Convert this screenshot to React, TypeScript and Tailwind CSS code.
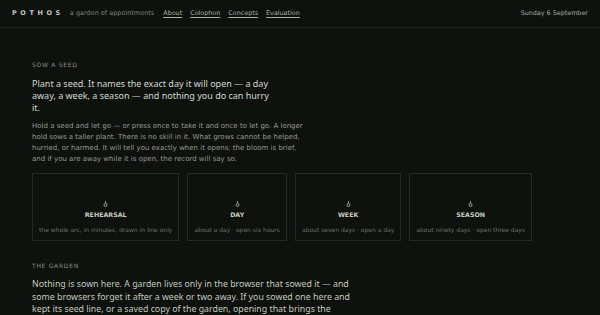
import React from "react";

const seeds = [
  { name: "REHEARSAL", note: "the whole arc, in minutes, drawn in line only" },
  { name: "DAY", note: "about a day · open six hours" },
  { name: "WEEK", note: "about seven days · open a day" },
  { name: "SEASON", note: "about ninety days · open three days" },
];

function Seed() {
  return (
    <svg width="5" height="6" viewBox="0 0 5 6" className="text-[#b9c0b5]">
      <line x1="2.5" y1="0" x2="2.5" y2="2.4" stroke="currentColor" strokeWidth="0.8" />
      <circle cx="2.5" cy="4" r="1.5" fill="none" stroke="currentColor" strokeWidth="0.8" />
    </svg>
  );
}

export default function App() {
  return (
    <div className="h-[315px] overflow-hidden bg-[#0e110e] font-['DejaVu_Sans',sans-serif] text-[#c9cfc5]">
      {/* Top bar */}
      <header className="flex items-center h-[28px] px-[12px] border-b border-[#1f241f]">
        <span className="text-[6.5px] font-bold tracking-[0.55em] text-[#c3c9bf]">POTHOS</span>
        <span className="ml-[6px] text-[6.5px] text-[#7d8479]">a garden of appointments</span>
        <nav className="ml-[9px] flex gap-[8px] text-[6.4px] text-[#a9b0a5]">
          <a className="underline underline-offset-2">About</a>
          <a className="underline underline-offset-2">Colophon</a>
          <a className="underline underline-offset-2">Concepts</a>
          <a className="underline underline-offset-2">Evaluation</a>
        </nav>
        <span className="ml-auto text-[6.4px] text-[#a3aa9f]">Sunday 6 September</span>
      </header>

      <main className="px-[32px] pt-[32px]">
        {/* Sow a seed */}
        <section>
          <h2 className="text-[6px] tracking-[0.12em] text-[#8a9187]">SOW A SEED</h2>
          <p className="mt-[9px] w-[240px] font-['Noto_Sans',sans-serif] text-[9px] leading-[12px] text-[#d3d9cf]">
            Plant a seed. It names the exact day it will open — a day away, a week, a season — and nothing you do can hurry it.
          </p>
          <p className="mt-[7px] w-[280px] text-[7px] leading-[11px] text-[#959c91]">
            Hold a seed and let go — or press once to take it and once to let go. A longer hold sows a taller plant. There is no skill in it. What grows cannot be helped, hurried, or harmed. It will tell you exactly when it opens; the bloom is brief, and if you are away while it is open, the record will say so.
          </p>
        </section>

        <div className="mt-[8px] flex gap-[8px] w-[495px]">
          {seeds.map((s) => (
            <div
              key={s.name}
              className="flex-auto flex flex-col items-center border border-[#252a25] pt-[27px] pb-[6px] px-[6px]"
            >
              <Seed />
              <span className="mt-[3px] text-[6.3px] font-bold text-[#c7cdc3]">{s.name}</span>
              <span className="mt-[6px] text-[6px] text-[#6a7167] whitespace-nowrap">{s.note}</span>
            </div>
          ))}
        </div>

        {/* The garden */}
        <section className="mt-[20px]">
          <h2 className="text-[6px] tracking-[0.12em] text-[#8a9187]">THE GARDEN</h2>
          <p className="mt-[8px] w-[318px] font-['Noto_Sans',sans-serif] text-[8.8px] leading-[12.5px] text-[#c3c9bf]">
            Nothing is sown here. A garden lives only in the browser that sowed it — and some browsers forget it after a week or two away. If you sowed one here and kept its seed line, or a saved copy of the garden, opening that brings the garden back.
          </p>
        </section>
      </main>
    </div>
  );
}
